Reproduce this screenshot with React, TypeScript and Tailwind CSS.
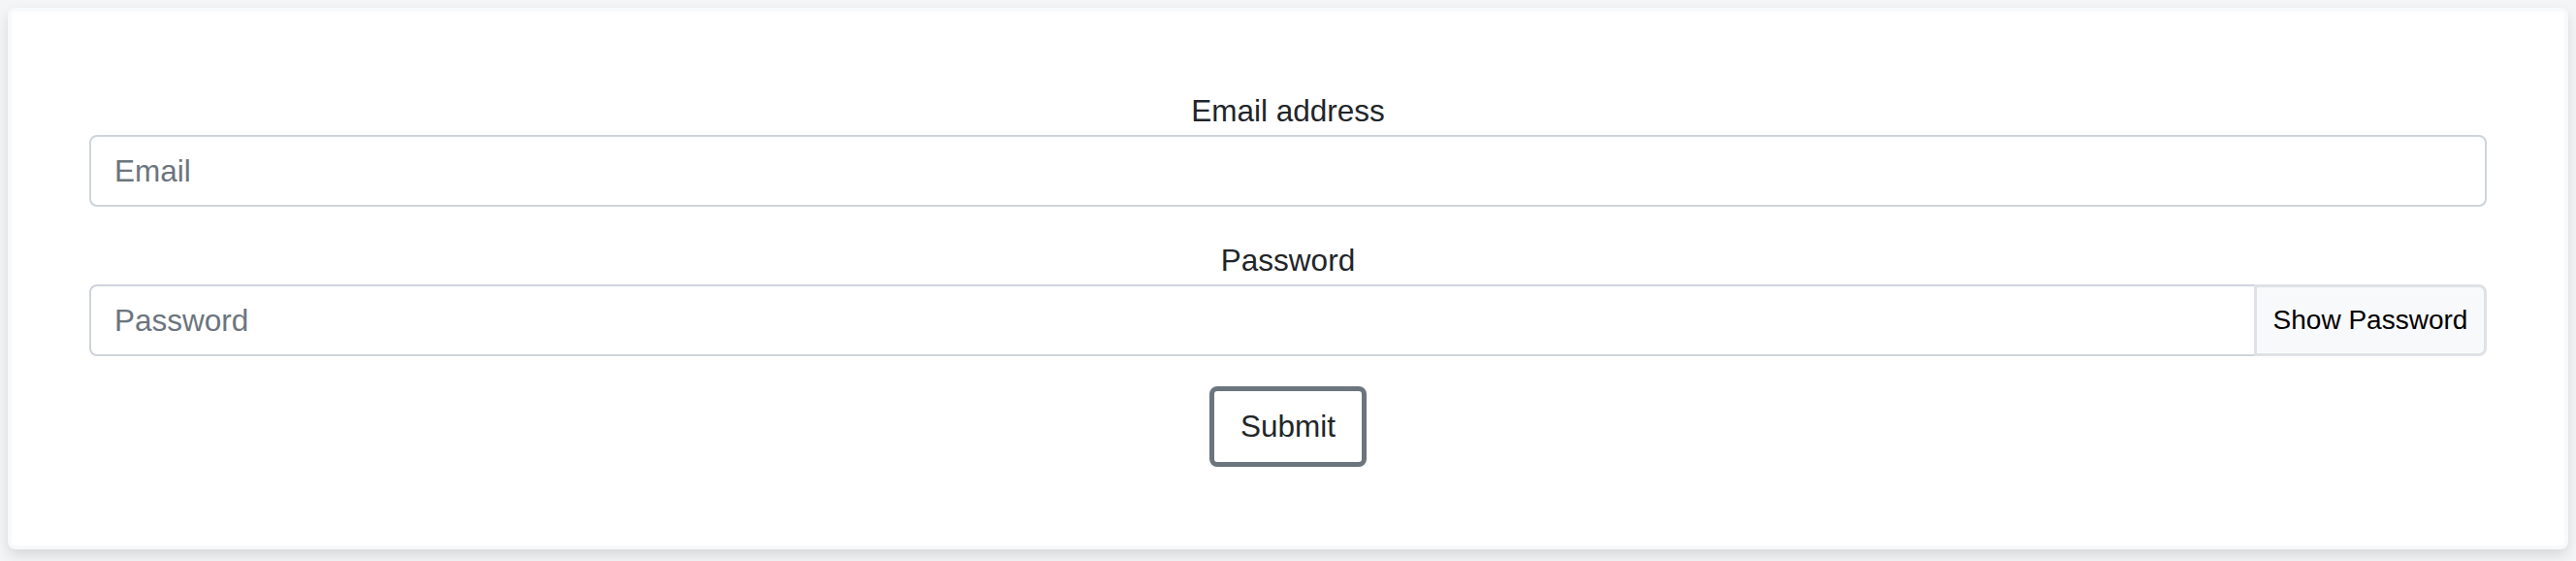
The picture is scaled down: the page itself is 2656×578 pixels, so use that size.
import { useState } from "react";

export default function App() {
  const [show, setShow] = useState(false);

  return (
    <div className="h-screen overflow-hidden bg-[#f4f5f6] p-2 font-['Liberation_Sans',Arial,sans-serif]">
      <div className="rounded-lg border-4 border-[#f8f9fa] bg-white px-[80px] pt-[79px] pb-[81px] shadow-[0_6px_14px_rgba(0,0,0,0.12)]">
        <form className="flex flex-col items-center" onSubmit={(e) => e.preventDefault()}>
          {/* Email */}
          <label htmlFor="email" className="text-[31.5px] leading-[47px] text-[#212529]">
            Email address
          </label>
          <input
            id="email"
            type="email"
            placeholder="Email"
            className="mt-px h-[74px] w-full rounded-lg border-2 border-[#ced4da] bg-white px-6 text-[31.5px] text-[#212529] outline-none placeholder:text-[#6c757d]"
          />

          {/* Password */}
          <label htmlFor="password" className="mt-8 text-[31.5px] leading-[47px] text-[#212529]">
            Password
          </label>
          <div className="mt-px flex h-[74px] w-full">
            <input
              id="password"
              type={show ? "text" : "password"}
              placeholder="Password"
              className="h-full min-w-0 flex-1 rounded-l-lg border-2 border-r-0 border-[#ced4da] bg-white px-6 text-[31.5px] text-[#212529] outline-none placeholder:text-[#6c757d]"
            />
            <button
              type="button"
              onClick={() => setShow(!show)}
              className="h-full w-[240px] rounded-r-lg border-[3px] border-[#dee2e6] bg-[#f8f9fa] text-[28px] text-black"
            >
              Show Password
            </button>
          </div>

          {/* Submit */}
          <button
            type="submit"
            className="mt-[31px] h-[83px] w-[162px] rounded-lg border-[5px] border-[#6c757d] bg-white text-[31.5px] leading-[47px] text-[#212529]"
          >
            Submit
          </button>
        </form>
      </div>
    </div>
  );
}
